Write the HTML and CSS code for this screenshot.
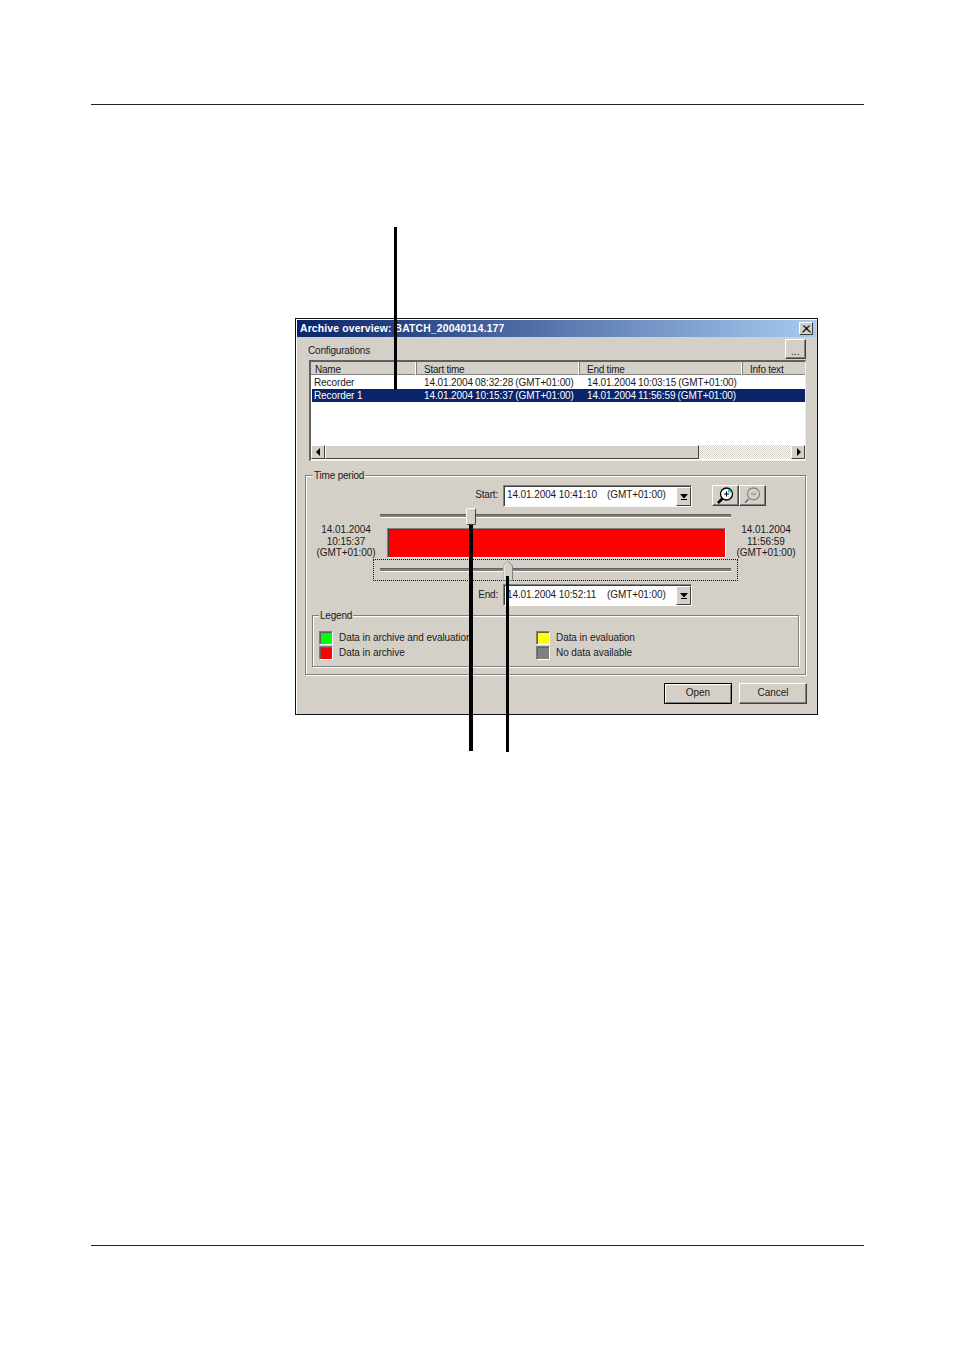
FILE: index.html
```html
<!DOCTYPE html>
<html lang="en">
<head>
<meta charset="utf-8">
<title>Archive overview</title>
<link rel="stylesheet" href="styles.css">
</head>
<body>
<div class="page">
  <div class="rule rule-top"></div>
  <div class="dialog">
    <div class="titlebar">
      <span class="title-text">Archive overview: BATCH_20040114.177</span>
      <span class="close"><svg width="9" height="8" viewBox="0 0 9 8"><path d="M1 0.5L8 7.5M2 0.5L9 7.5M8 0.5L1 7.5M7 0.5L0 7.5" stroke="#000" stroke-width="1" fill="none"/></svg></span>
    </div>
    <div class="body">
      <div class="config-row">
        <span class="config-label">Configurations</span>
        <span class="btn dots">...</span>
      </div>
      <div class="list">
        <div class="list-head">
          <span class="col">Name</span>
          <span class="col">Start time</span>
          <span class="col">End time</span>
          <span class="col">Info text</span>
        </div>
        <div class="list-row">
          <span class="cell first">Recorder</span>
          <span class="cell">14.01.2004 08:32:28 (GMT+01:00)</span>
          <span class="cell">14.01.2004 10:03:15 (GMT+01:00)</span>
          <span class="cell"></span>
        </div>
        <div class="list-row selected">
          <span class="cell first">Recorder 1</span>
          <span class="cell">14.01.2004 10:15:37 (GMT+01:00)</span>
          <span class="cell">14.01.2004 11:56:59 (GMT+01:00)</span>
          <span class="cell"></span>
        </div>
        <div class="list-fill"></div>
        <div class="hscroll">
          <span class="sb-btn"><svg width="5" height="8" viewBox="0 0 5 8"><path d="M4 0V8L0 4Z" fill="#000"/></svg></span>
          <span class="sb-thumb"></span>
          <span class="sb-track"></span>
          <span class="sb-btn"><svg width="5" height="8" viewBox="0 0 5 8"><path d="M1 0V8L5 4Z" fill="#000"/></svg></span>
        </div>
      </div>

      <div class="group time-group">
        <span class="group-title time-title">Time period</span>
        <div class="field-row">
          <span class="field-label">Start:</span>
          <div class="combo">
            <span class="combo-date">14.01.2004 10:41:10</span><span>(GMT+01:00)</span>
            <span class="combo-btn"><svg width="8" height="7" viewBox="0 0 8 7"><path d="M0 1H8L4 5.5Z M1 6H7V7H1Z" fill="#000"/></svg></span>
          </div>
          <span class="btn zoom first-zoom">
            <svg width="22" height="19" viewBox="0 0 22 19"><path d="M3 17L7.5 12.5" stroke="#000" stroke-width="2.6"/><circle cx="11.5" cy="8" r="6" fill="#fff" stroke="#000" stroke-width="1.3"/><path d="M13 3A5.2 5.2 0 0 1 16.6 6.6L13 6.5Z" fill="#19d4e0"/><path d="M9 8H14M11.5 5.5V10.5" stroke="#000" stroke-width="1"/></svg>
          </span>
          <span class="btn zoom">
            <svg width="22" height="19" viewBox="0 0 22 19"><path d="M3 17.5L7.5 13" stroke="#fff" stroke-width="3"/><path d="M3 17L7.5 12.5" stroke="#808080" stroke-width="2.4"/><circle cx="11.5" cy="8.5" r="6" fill="none" stroke="#fff" stroke-width="1.4"/><circle cx="11.5" cy="8" r="6" fill="none" stroke="#808080" stroke-width="1.3"/><path d="M9 8H14" stroke="#808080" stroke-width="1"/></svg>
          </span>
        </div>
        <div class="slider slider-top">
          <div class="track"></div>
          <span class="thumb thumb-start"></span>
        </div>
        <div class="bar-row">
          <div class="stamp">14.01.2004<br>10:15:37<br>(GMT+01:00)</div>
          <div class="bar"></div>
          <div class="stamp">14.01.2004<br>11:56:59<br>(GMT+01:00)</div>
        </div>
        <div class="focus">
          <div class="track"></div>
          <svg class="thumb-end" width="10" height="20" viewBox="0 0 10 20"><path d="M0.5 19.5V5L5 0.5L9.5 5V19.5Z" fill="#d4d0c8" stroke="#808080"/><path d="M1 19V5.3L5 1.3" fill="none" stroke="#fff"/></svg>
        </div>
        <div class="field-row end-row">
          <span class="field-label">End:</span>
          <div class="combo">
            <span class="combo-date">14.01.2004 10:52:11</span><span>(GMT+01:00)</span>
            <span class="combo-btn"><svg width="8" height="7" viewBox="0 0 8 7"><path d="M0 1H8L4 5.5Z M1 6H7V7H1Z" fill="#000"/></svg></span>
          </div>
        </div>
        <div class="group legend">
          <span class="group-title legend-title">Legend</span>
          <div class="legend-grid">
            <div class="legend-item"><span class="swatch green"></span>Data in archive and evaluation</div>
            <div class="legend-item"><span class="swatch yellow"></span>Data in evaluation</div>
            <div class="legend-item"><span class="swatch red"></span>Data in archive</div>
            <div class="legend-item"><span class="swatch grey"></span>No data available</div>
          </div>
        </div>
      </div>

      <div class="footer">
        <span class="btn action default">Open</span>
        <span class="btn action">Cancel</span>
      </div>
    </div>
  </div>
  <div class="rule rule-bottom"></div>
  <span class="callout callout-a"></span>
  <span class="callout callout-b"></span>
  <span class="callout callout-c"></span>
</div>
</body>
</html>
```
FILE: styles.css
```css
* { box-sizing: border-box; }
html, body { margin: 0; padding: 0; background: #fff; }
body { font-family: "Liberation Sans", Arial, sans-serif; font-size: 10px; color: #1a1a1a; }
.page { position: relative; width: 954px; height: 1350px; padding-top: 104px; overflow: hidden; }
.rule { height: 1px; margin: 0 90px 0 91px; background: #222; }
.rule-bottom { margin-top: 530px; }

.dialog {
  width: 523px; height: 397px; margin: 213px 0 0 295px; padding: 1px;
  background: #d4d0c8; border: 1px solid #111; box-shadow: inset 1px 1px 0 #fff;
}
.titlebar {
  display: flex; align-items: center; justify-content: space-between;
  height: 17px; padding: 0 3px 0 3px;
  background: linear-gradient(90deg, #0a246a, #a6caf0);
}
.title-text { color: #fff; font: bold 10.4px "Liberation Sans", Arial, sans-serif; letter-spacing: 0.15px; }
.close {
  display: flex; align-items: center; justify-content: center; width: 14px; height: 13px;
  background: #d4d0c8; border: 1px solid; border-color: #fff #404040 #404040 #fff;
}
.body { padding: 0 10px 0 8px; }
.btn {
  display: flex; align-items: center; justify-content: center; background: #d4d0c8;
  border: 1px solid; border-color: #fff #404040 #404040 #fff; box-shadow: inset -1px -1px 0 #808080;
}
.config-row { display: flex; justify-content: space-between; height: 20px; margin-top: 2px; padding-left: 3px; }
.config-label { margin-top: 6px; line-height: 12px; letter-spacing: -0.18px; }
.dots { width: 21px; height: 20px; padding-top: 5px; }

.list {
  display: flex; flex-direction: column; width: 497px; height: 101px; margin: 1px 0 0 4px;
  background: #fff; border-style: solid; border-width: 2px 1px 1px 2px; border-color: #606060 #eeeeea #eeeeea #606060;
}
.list-head, .list-row { display: grid; flex: none; }
.list-head { grid-template-columns: 106px 163px 163px 1fr; height: 13px; background: #d4d0c8; box-shadow: inset 0 -1px 0 #808080; }
.col { padding-left: 7px; line-height: 15px; border-right: 1px solid #808080; box-shadow: inset -1px 0 0 #fff; overflow: hidden; letter-spacing: -0.24px; }
.col:first-child { padding-left: 4px; }
.col:last-child { border-right: 0; box-shadow: none; }
.list-row { grid-template-columns: 105px 163px 163px 1fr; height: 14px; line-height: 15px; margin-left: 1px; }
.list-row.selected { height: 13px; line-height: 13px; background: #0a246a; color: #fff; }
.cell { padding-left: 7px; white-space: nowrap; letter-spacing: -0.12px; word-spacing: -0.4px; }
.cell.first { padding-left: 2px; letter-spacing: -0.1px; word-spacing: 0; }
.list-fill { flex: 1; }
.hscroll { display: flex; flex: none; height: 14px; margin-bottom: 1px; }
.sb-btn {
  display: flex; align-items: center; justify-content: center; flex: none; width: 14px;
  background: #d4d0c8; border: 1px solid; border-color: #fff #404040 #404040 #fff;
}
.sb-thumb { flex: none; width: 374px; background: #d4d0c8; border: 1px solid; border-color: #fff #404040 #404040 #fff; }
.sb-track { flex: 1; background: repeating-conic-gradient(#fff 0 25%, #d4d0c8 0 50%) 0 0 / 2px 2px; }

.group { position: relative; border: 1px solid #808080; box-shadow: 1px 1px 0 #fff, inset 1px 1px 0 #fff; }
.group-title { position: absolute; padding: 0 1px; background: #d4d0c8; line-height: 12px; letter-spacing: -0.2px; }
.time-group { width: 501px; height: 200px; margin-top: 14px; padding-top: 9px; }
.time-title { top: -6px; left: 7px; }
.legend-title { top: -6px; left: 6px; }
.field-row { display: flex; align-items: flex-start; height: 22px; }
.field-label { width: 192px; text-align: right; line-height: 19px; letter-spacing: -0.2px; }
.end-row .field-label { line-height: 21px; }
.combo {
  display: flex; align-items: center; width: 189px; height: 22px; margin-left: 5px; padding: 0 0 3px 3px;
  background: #fff; border: 1px solid; border-color: #808080 #fff #fff #808080; position: relative;
  box-shadow: inset 1px 1px 0 #404040; letter-spacing: -0.1px; white-space: nowrap;
}
.end-row .combo { padding-bottom: 1px; }
.combo-date { width: 100px; flex: none; }
.combo-btn {
  display: flex; align-items: center; justify-content: center; position: absolute; right: 0; top: 1px;
  width: 15px; height: 19px; background: #d4d0c8; border: 1px solid; border-color: #fff #404040 #404040 #fff;
}
.zoom { width: 27px; height: 21px; }
.first-zoom { margin-left: 20px; }

.slider { position: relative; width: 351px; height: 16px; margin-left: 74px; }
.track { height: 4px; background: #808080; border-bottom: 1px solid #fff; border-top: 1px solid #606060; }
.slider-top .track { margin-top: 7px; position: absolute; left: 0; right: 0; top: 0; }
.thumb {
  position: absolute; top: 1px; width: 10px; height: 17px; background: #d4d0c8;
  border: 1px solid; border-color: #fff #404040 #404040 #fff; border-radius: 2px;
}
.thumb-start { left: 86px; }

.bar-row { display: grid; grid-template-columns: 81px 339px 80px; height: 36px; }
.stamp { padding-top: 1px; text-align: center; line-height: 11.5px; letter-spacing: -0.05px; white-space: nowrap; }
.stamp:first-child { padding-right: 1px; }
.bar { height: 30px; margin-top: 5px; background: #ff0000; border: 1px solid; border-color: #808080 #fff #fff #808080; box-shadow: inset 1px 1px 0 #404040; }
.focus {
  position: relative; width: 365px; height: 22px; margin-left: 67px; padding: 8px 6px 0;
  border: 1px dotted #111;
}
.thumb-end { position: absolute; left: 129px; top: 1px; }
.end-row { margin-top: 3px; }

.legend { width: 487px; height: 52px; margin: 9px 0 0 6px; padding: 15px 0 0 6px; }
.legend-grid { display: grid; grid-template-columns: 217px 1fr; row-gap: 1px; }
.legend-item { display: flex; align-items: center; gap: 6px; height: 14px; line-height: 12px; letter-spacing: -0.07px; white-space: nowrap; }
.swatch { flex: none; width: 14px; height: 14px; border: 1px solid; border-color: #808080 #fff #fff #808080; box-shadow: inset 1px 1px 0 #606060; }
.green { background: #00ff00; }
.yellow { background: #ffff00; }
.red { background: #ff0000; }
.grey { background: #808080; }

.footer { display: flex; justify-content: flex-end; gap: 7px; margin: 8px -1px 0 0; }
.action { width: 68px; height: 21px; padding-bottom: 2px; letter-spacing: -0.05px; }
.default { border: 1px solid #000; box-shadow: inset 1px 1px 0 #fff, inset -1px -1px 0 #808080; }

.callout { position: absolute; background: #000; }
.callout-a { left: 394px; top: 227px; width: 3px; height: 163px; }
.callout-b { left: 469px; top: 525px; width: 4px; height: 226px; }
.callout-c { left: 506px; top: 576px; width: 3px; height: 176px; }
```
